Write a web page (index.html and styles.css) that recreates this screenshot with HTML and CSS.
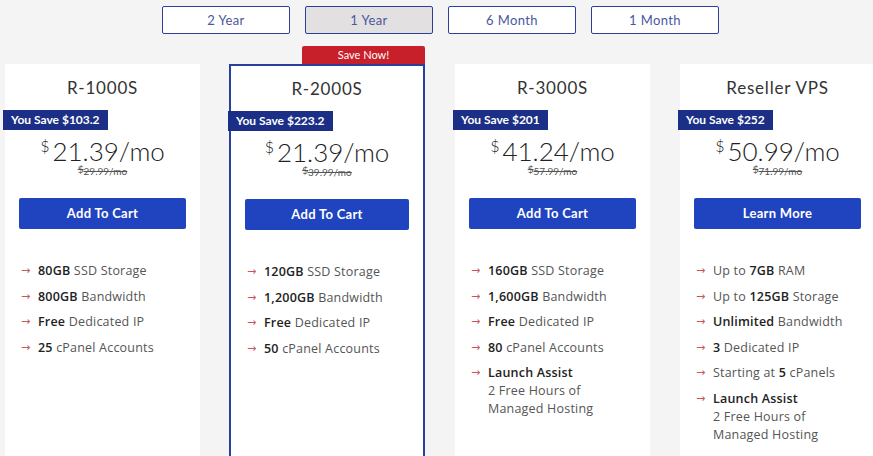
FILE: index.html
```html
<!DOCTYPE html>
<html lang="en">
<head>
  <meta charset="UTF-8">
  <meta name="viewport" content="width=device-width, initial-scale=1.0">
  <title>Reseller Hosting Plans</title>
  <link rel="stylesheet" href="styles.css">
</head>
<body>
  <div class="terms">
    <button type="button" class="term">2 Year</button>
    <button type="button" class="term active">1 Year</button>
    <button type="button" class="term">6 Month</button>
    <button type="button" class="term">1 Month</button>
  </div>

  <div class="plans">
    <div class="plan">
      <h2>R-1000S</h2>
      <div class="save">You Save $103.2</div>
      <div class="price"><sup>$</sup>21.39/mo</div>
      <div class="old"><s><sup>$</sup>29.99/mo</s></div>
      <a class="cta" href="#">Add To Cart</a>
      <ul class="features">
        <li><b>80GB</b> SSD Storage</li>
        <li><b>800GB</b> Bandwidth</li>
        <li><b>Free</b> Dedicated IP</li>
        <li><b>25</b> cPanel Accounts</li>
      </ul>
    </div>

    <div class="plan featured">
      <div class="ribbon">Save Now!</div>
      <h2>R-2000S</h2>
      <div class="save">You Save $223.2</div>
      <div class="price"><sup>$</sup>21.39/mo</div>
      <div class="old"><s><sup>$</sup>39.99/mo</s></div>
      <a class="cta" href="#">Add To Cart</a>
      <ul class="features">
        <li><b>120GB</b> SSD Storage</li>
        <li><b>1,200GB</b> Bandwidth</li>
        <li><b>Free</b> Dedicated IP</li>
        <li><b>50</b> cPanel Accounts</li>
      </ul>
    </div>

    <div class="plan">
      <h2>R-3000S</h2>
      <div class="save">You Save $201</div>
      <div class="price"><sup>$</sup>41.24/mo</div>
      <div class="old"><s><sup>$</sup>57.99/mo</s></div>
      <a class="cta" href="#">Add To Cart</a>
      <ul class="features">
        <li><b>160GB</b> SSD Storage</li>
        <li><b>1,600GB</b> Bandwidth</li>
        <li><b>Free</b> Dedicated IP</li>
        <li><b>80</b> cPanel Accounts</li>
        <li><b>Launch Assist</b><br>2 Free Hours of<br>Managed Hosting</li>
      </ul>
    </div>

    <div class="plan">
      <h2>Reseller VPS</h2>
      <div class="save">You Save $252</div>
      <div class="price"><sup>$</sup>50.99/mo</div>
      <div class="old"><s><sup>$</sup>71.99/mo</s></div>
      <a class="cta" href="#">Learn More</a>
      <ul class="features">
        <li>Up to <b>7GB</b> RAM</li>
        <li>Up to <b>125GB</b> Storage</li>
        <li><b>Unlimited</b> Bandwidth</li>
        <li><b>3</b> Dedicated IP</li>
        <li>Starting at <b>5</b> cPanels</li>
        <li><b>Launch Assist</b><br>2 Free Hours of<br>Managed Hosting</li>
      </ul>
    </div>
  </div>
</body>
</html>
```

FILE: styles.css
```css
body {
  margin: 0;
  background: #f4f4f4;
  font-family: Lato, "Open Sans", sans-serif;
  color: #333;
  overflow: hidden;
}

.terms {
  display: flex;
  gap: 15px;
  padding: 6px 0 0 162px;
}

.term {
  width: 128px;
  height: 28px;
  border: 1px solid #2d3f9a;
  border-radius: 2px;
  background: #fff;
  color: #4a57a0;
  font-family: Lato, sans-serif;
  font-size: 13px;
  letter-spacing: 0.4px;
  cursor: pointer;
}

.term.active {
  background: #e2e0e0;
}

.plans {
  display: grid;
  grid-template-columns: repeat(4, 195px);
  gap: 30px;
  padding: 30px 0 0 5px;
}

.plan {
  position: relative;
  background: #fff;
  min-height: 420px;
  padding-top: 14px;
  box-sizing: border-box;
}

.plan.featured {
  border: 2px solid #27409c;
  padding-top: 13px;
  margin-left: -1px;
}

.ribbon {
  position: absolute;
  top: -20px;
  right: -2px;
  width: 123px;
  height: 18px;
  line-height: 18px;
  background: #c8202a;
  color: #fff;
  font-size: 11px;
  text-align: center;
  border-radius: 2px 2px 0 0;
}

.plan h2 {
  margin: 0;
  text-align: center;
  font-weight: 400;
  font-size: 17px;
  line-height: 20px;
  letter-spacing: 0.8px;
  color: #333;
}

.save {
  display: inline-block;
  margin: 12px 0 0 -2px;
  padding: 0 8px;
  height: 20px;
  line-height: 20px;
  background: #1b2f86;
  color: #fff;
  font-size: 12px;
  font-weight: 700;
}

.featured .save {
  margin-left: -3px;
}

.price {
  margin-top: 8px;
  text-align: center;
  font-size: 26px;
  font-weight: 300;
  line-height: 26px;
  color: #222;
}

.price sup {
  font-size: 16px;
  line-height: 0;
  vertical-align: 9px;
  margin-right: 3px;
}

.old {
  margin-top: 2px;
  text-align: center;
  font-size: 10px;
  line-height: 11px;
  color: #555;
}

.old sup {
  font-size: 10px;
  line-height: 0;
  vertical-align: 2px;
}

.cta {
  display: block;
  margin: 21px 14px 0;
  height: 31px;
  line-height: 31px;
  background: #2043c0;
  color: #fff;
  text-align: center;
  font-size: 13px;
  font-weight: 700;
  letter-spacing: 0.3px;
  text-decoration: none;
  border-radius: 2px;
}

.features {
  list-style: none;
  margin: 33px 0 0;
  padding: 0 0 0 33px;
  font-family: "Open Sans", sans-serif;
  font-size: 12.5px;
  letter-spacing: 0.2px;
  color: #555;
}

.features li {
  position: relative;
  line-height: 18px;
  margin-bottom: 7.5px;
}

.features li::before {
  content: "\2192";
  position: absolute;
  left: -17px;
  font-family: "DejaVu Sans", sans-serif;
  color: #c85660;
  font-size: 11px;
}

.features b {
  font-weight: 600;
  color: #222;
}
```
